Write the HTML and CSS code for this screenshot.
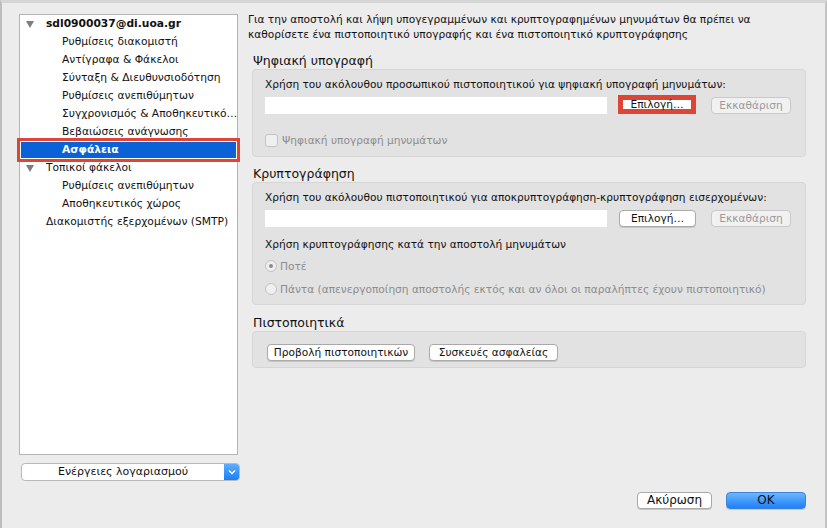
FILE: index.html
```html
<!DOCTYPE html>
<html lang="el">
<head>
    <meta charset="UTF-8">
    <title>Ρυθμίσεις λογαριασμού</title>
    <link rel="stylesheet" href="styles.css">
</head>
<body>
    <div class="window">
        <div class="sidebar">
            <div class="tree">
                <div class="row account"><span class="twisty"></span>sdl0900037@di.uoa.gr</div>
                <div class="row child">Ρυθμίσεις διακομιστή</div>
                <div class="row child">Αντίγραφα &amp; Φάκελοι</div>
                <div class="row child">Σύνταξη &amp; Διευθυνσιοδότηση</div>
                <div class="row child">Ρυθμίσεις ανεπιθύμητων</div>
                <div class="row child">Συγχρονισμός &amp; Αποθηκευτικό…</div>
                <div class="row child">Βεβαιώσεις ανάγνωσης</div>
                <div class="row child selected">Ασφάλεια</div>
                <div class="row local"><span class="twisty"></span>Τοπικοί φάκελοι</div>
                <div class="row child">Ρυθμίσεις ανεπιθύμητων</div>
                <div class="row child">Αποθηκευτικός χώρος</div>
                <div class="row top">Διακομιστής εξερχομένων (SMTP)</div>
            </div>
            <div class="dropdown">
                <span class="dropdown-label">Ενέργειες λογαριασμού</span>
                <span class="dropdown-arrow">
                    <svg width="8" height="6" viewBox="0 0 8 6"><path d="M1 1.5 L4 4.5 L7 1.5" fill="none" stroke="#fff" stroke-width="1.5"/></svg>
                </span>
            </div>
        </div>

        <div class="content">
            <p class="intro">Για την αποστολή και λήψη υπογεγραμμένων και κρυπτογραφημένων μηνυμάτων θα πρέπει να καθορίσετε ένα πιστοποιητικό υπογραφής και ένα πιστοποιητικό κρυπτογράφησης</p>

            <div class="section sign">
                <h2>Ψηφιακή υπογραφή</h2>
                <div class="group">
                    <p class="label">Χρήση του ακόλουθου προσωπικού πιστοποιητικού για ψηφιακή υπογραφή μηνυμάτων:</p>
                    <div class="cert-row">
                        <div class="field"></div>
                        <button class="btn btn-choose marked">Επιλογή…</button>
                        <button class="btn btn-clear" disabled>Εκκαθάριση</button>
                    </div>
                    <label class="option disabled sign-option"><span class="checkbox"></span>Ψηφιακή υπογραφή μηνυμάτων</label>
                </div>
            </div>

            <div class="section encrypt">
                <h2>Κρυπτογράφηση</h2>
                <div class="group">
                    <p class="label">Χρήση του ακόλουθου πιστοποιητικού για αποκρυπτογράφηση-κρυπτογράφηση εισερχομένων:</p>
                    <div class="cert-row">
                        <div class="field"></div>
                        <button class="btn btn-choose">Επιλογή…</button>
                        <button class="btn btn-clear" disabled>Εκκαθάριση</button>
                    </div>
                    <p class="label encrypt-label">Χρήση κρυπτογράφησης κατά την αποστολή μηνυμάτων</p>
                    <label class="option disabled"><span class="radio checked"></span>Ποτέ</label>
                    <label class="option disabled"><span class="radio"></span>Πάντα (απενεργοποίηση αποστολής εκτός και αν όλοι οι παραλήπτες έχουν πιστοποιητικό)</label>
                </div>
            </div>

            <div class="section certs">
                <h2>Πιστοποιητικά</h2>
                <div class="group group-certs">
                    <button class="btn btn-view">Προβολή πιστοποιητικών</button>
                    <button class="btn btn-devices">Συσκευές ασφαλείας</button>
                </div>
            </div>

            <div class="footer">
                <button class="btn btn-cancel">Ακύρωση</button>
                <button class="btn btn-ok">OK</button>
            </div>
        </div>
    </div>
</body>
</html>
```

FILE: styles.css
```css
html, body {
    margin: 0;
    height: 100%;
}
body {
    font-family: "DejaVu Sans", "Liberation Sans", sans-serif;
    font-size: 10.6px;
    color: #111;
    background: #ececec;
}
.window {
    display: flex;
    height: 528px;
    box-sizing: border-box;
    border-top: 3px solid #d6d6d6;
    border-left: 2px solid #bdbdbd;
    border-right: 2px solid #c4c4c4;
}

/* left column */
.sidebar {
    width: 239px;
    padding: 11px 0 0 17px;
    box-sizing: border-box;
    flex-shrink: 0;
}
.tree {
    width: 219px;
    height: 441px;
    box-sizing: border-box;
    background: #fff;
    border: 1px solid #b4b4b4;
    padding-top: 0;
    font-size: 10.7px;
}
.row {
    height: 18px;
    line-height: 18px;
    white-space: nowrap;
    position: relative;
    margin: 0 1px;
}
.row.account {
    padding-left: 25px;
    font-weight: bold;
}
.row.local {
    padding-left: 25px;
}
.row.child {
    padding-left: 41px;
}
.row.top {
    padding-left: 25px;
}
.twisty {
    position: absolute;
    left: 5px;
    top: 6px;
    width: 0;
    height: 0;
    border-left: 4.5px solid transparent;
    border-right: 4.5px solid transparent;
    border-top: 7px solid #7d7d7d;
}
.row.selected {
    background: #0b62d6;
    color: #fff;
    font-weight: bold;
    height: 16px;
    line-height: 16px;
    margin-top: 1px;
    margin-bottom: 1px;
    outline: 3px solid #dd4637;
    outline-offset: 1px;
}
.dropdown {
    margin: 8px 0 0 2px;
    width: 219px;
    height: 18px;
    box-sizing: border-box;
    display: flex;
    background: #fff;
    border: 1px solid #b9b9b9;
    border-radius: 4px;
    overflow: hidden;
    font-size: 11px;
}
.dropdown-label {
    flex: 1;
    text-align: center;
    line-height: 16px;
}
.dropdown-arrow {
    width: 15px;
    display: flex;
    align-items: center;
    justify-content: center;
    background: linear-gradient(#5eaefc, #1a7ef5);
}

/* right column */
.content {
    flex: 1;
    display: flex;
    flex-direction: column;
    padding: 0 19px 0 7px;
}
.intro {
    margin: 9px 0 0 0;
    line-height: 15px;
}
.section h2 {
    font-size: 12.5px;
    font-weight: normal;
    margin: 11px 0 0 5px;
    line-height: 16px;
}
.encrypt h2 { margin-top: 9px; }
.certs h2 { margin-top: 10px; }
.group {
    margin-left: 4px;
    background: #e2e2e2;
    border: 1px solid #d6d6d6;
    border-radius: 4px;
    padding: 7px 13px 8px 12px;
}
.sign .group {
    padding-bottom: 9px;
}
.label {
    margin: 0;
    line-height: 14px;
}
.cert-row {
    display: flex;
    align-items: center;
    margin-top: 6px;
    height: 17px;
}
.field {
    width: 342px;
    height: 17px;
    background: #fff;
}
.btn {
    font-family: inherit;
    font-size: 10.6px;
    color: #111;
    background: #fff;
    border: 1px solid #a9a9a9;
    border-radius: 4px;
    box-shadow: 0 1px 0 #c6c6c6;
    height: 17px;
    padding: 0;
    line-height: 15px;
    white-space: nowrap;
}
.btn-choose {
    width: 77px;
    margin-left: 12px;
}
.btn-choose.marked {
    border: 5px solid #dd4637;
    border-radius: 0;
    box-shadow: none;
    height: 19px;
    width: 78px;
    margin-left: 11px;
    line-height: 9px;
    align-self: flex-start;
    margin-top: -2px;
}
.btn-clear {
    width: 80px;
    margin-left: 15px;
    background: #f1f1f1;
    border-color: #c9c9c9;
    color: #9a9a9a;
    box-shadow: none;
}
.option {
    display: flex;
    align-items: center;
    line-height: 14px;
}
.disabled {
    color: #8c8c8c;
}
.sign-option {
    margin-top: 19px;
}
.checkbox {
    width: 11px;
    height: 11px;
    border: 1px solid #c3c3c3;
    border-radius: 3px;
    background: #efefef;
    margin-right: 4px;
}
.encrypt-label {
    margin-top: 10px;
}
.radio {
    width: 12px;
    height: 12px;
    box-sizing: border-box;
    border: 1px solid #c3c3c3;
    border-radius: 50%;
    background: #efefef;
    margin-right: 3px;
    display: flex;
    align-items: center;
    justify-content: center;
}
.radio.checked::after {
    content: "";
    width: 4px;
    height: 4px;
    border-radius: 50%;
    background: #8a8a8a;
}
.option + .option {
    margin-top: 9px;
}
.encrypt-label + .option {
    margin-top: 8px;
}
.group-certs {
    padding: 12px 13px 6px 14px;
    display: flex;
}
.btn-view {
    width: 148px;
}
.btn-devices {
    width: 129px;
    margin-left: 14px;
}
.footer {
    margin-top: auto;
    margin-bottom: 19px;
    display: flex;
    justify-content: flex-end;
}
.btn-cancel {
    width: 75px;
    font-size: 12px;
}
.btn-ok {
    width: 80px;
    margin-left: 14px;
    font-size: 12px;
    background: linear-gradient(#6db6fc, #1c80fa);
    border-color: #3d83d6;
}
```
